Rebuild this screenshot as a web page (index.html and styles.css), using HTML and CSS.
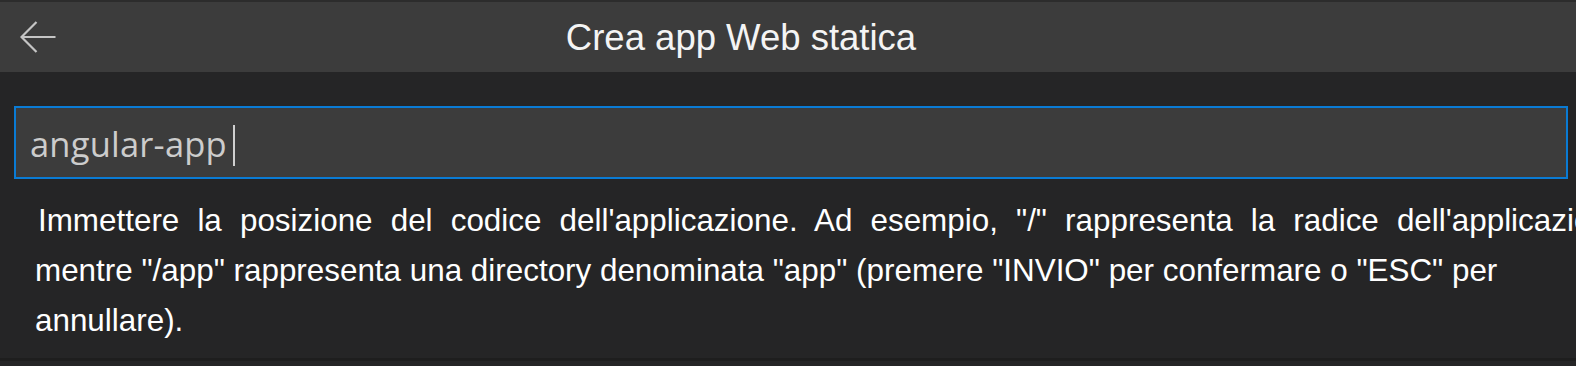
FILE: index.html
```html
<!DOCTYPE html>
<html lang="it">
<head>
    <meta charset="UTF-8">
    <meta name="viewport" content="width=device-width, initial-scale=1.0">
    <title>Crea app Web statica</title>
    <link rel="stylesheet" href="styles.css">
</head>
<body>

    <div class="quick-input">
        <!-- barra del titolo -->
        <div class="header">
            <button class="back-btn" aria-label="Indietro">
                <svg width="36" height="32" viewBox="0 0 36 32" fill="none" stroke="#c5c5c5" stroke-width="2.2">
                    <path d="M1.5 16 H35.5"/>
                    <path d="M16.5 1 L1.5 16 L16.5 31"/>
                </svg>
            </button>
            <div class="title">Crea app Web statica</div>
        </div>

        <!-- campo di input -->
        <div class="body">
            <div class="input-box">
                <span class="input-value">angular-app</span><span class="caret"></span>
            </div>

            <div class="message">
                <span class="line-first">Immettere la posizione del codice dell'applicazione. Ad esempio, "/" rappresenta la radice dell'applicazione,</span>
                <span class="line-rest">mentre "/app" rappresenta una directory denominata "app" (premere "INVIO" per confermare o "ESC" per annullare).</span>
            </div>
        </div>
    </div>

</body>
</html>
```

FILE: styles.css
```css
html, body {
    margin: 0;
    padding: 0;
    height: 100%;
}

body {
    background-color: #252526;
    font-family: "Liberation Sans", Arial, sans-serif;
    overflow: hidden;
}

.quick-input {
    border-top: 2px solid #2c2c2c;
    border-bottom: 3px solid #1e1e1e;
    height: 361px;
    box-sizing: border-box;
}

.header {
    background-color: #3c3c3c;
    height: 70px;
    display: flex;
    align-items: center;
    padding: 0 0 0 20px;
}

.back-btn {
    background: none;
    border: none;
    padding: 0;
    width: 36px;
    height: 32px;
    display: flex;
    margin-top: -1px;
    cursor: pointer;
}

.title {
    flex: 1;
    text-align: center;
    padding-right: 150px;
    color: #f4f4f4;
    font-size: 36.5px;
    margin-top: 1px;
}

.body {
    padding: 34px 8px 0 14px;
}

.input-box {
    background-color: #3c3c3c;
    border: 2px solid #0a7bd4;
    height: 67px;
    display: flex;
    align-items: center;
    padding: 2px 0 0 14px;
    box-sizing: content-box;
}

.input-value {
    font-family: "Open Sans", "Noto Sans", sans-serif;
    font-size: 34.5px;
    color: #cccccc;
    letter-spacing: 0.2px;
}

.caret {
    display: inline-block;
    width: 2px;
    height: 41px;
    background-color: #cfcfcf;
    margin-left: 6px;
    margin-top: 4px;
}

.message {
    margin-top: 17px;
    padding-left: 21px;
    color: #ffffff;
    font-size: 31.4px;
    line-height: 50px;
}

/* la prima riga e' giustificata e va oltre il bordo */
.line-first {
    display: block;
    width: 1600px;
    text-indent: 3px;
    text-align: justify;
    text-align-last: justify;
}

.line-rest {
    display: block;
    width: 1520px;
}
```
